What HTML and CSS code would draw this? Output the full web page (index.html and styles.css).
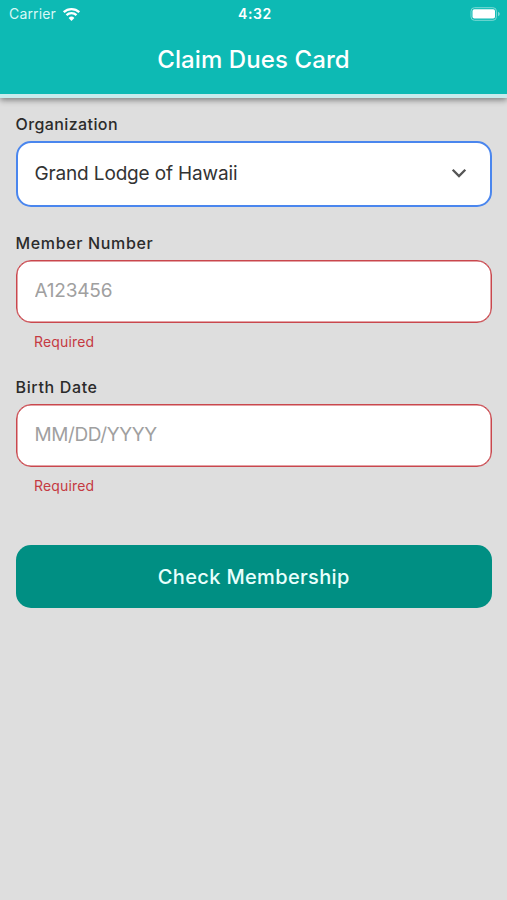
FILE: index.html
```html
<!DOCTYPE html>
<html lang="en">
<head>
  <meta charset="UTF-8">
  <meta name="viewport" content="width=device-width, initial-scale=1.0">
  <title>Claim Dues Card</title>
  <link rel="stylesheet" href="styles.css">
</head>
<body>
  <header class="header">
    <!-- Status Bar -->
    <div class="status-bar">
      <div class="carrier">
        <span>Carrier</span>
        <svg class="wifi" width="19" height="14" viewBox="0 0 18 14">
          <path d="M1.2 5.2a11.2 11.2 0 0 1 15.6 0M4 8.2a7.2 7.2 0 0 1 10 0" fill="none" stroke="#fff" stroke-width="2.3"/>
          <path d="M9 14 6.1 11a4.1 4.1 0 0 1 5.8 0z" fill="#fff"/>
        </svg>
      </div>
      <span class="time">4:32</span>
      <svg class="battery" width="31" height="14" viewBox="0 0 31 14">
        <rect x="1" y=".7" width="25.4" height="12.6" rx="3.5" fill="none" stroke="#7ddad5" stroke-width="1"/>
        <rect x="2.5" y="2.3" width="22.5" height="9.2" rx="1.8" fill="#fff"/>
        <path d="M28 4.8c2.4.8 2.4 3.6 0 4.4z" fill="#7ddad5"/>
      </svg>
    </div>
    <h1>Claim Dues Card</h1>
  </header>

  <form class="claim-form">
    <div class="field">
      <label class="label-organization" for="organization">Organization</label>
      <button type="button" class="control select" id="organization">
        <span class="organization-name">Grand Lodge of Hawaii</span>
        <svg width="16" height="10" viewBox="0 0 16 10">
          <path d="M1.7 1.7 8 8l6.3-6.3" fill="none" stroke="#555" stroke-width="2.3"/>
        </svg>
      </button>
    </div>
    <div class="field">
      <label for="member-number">Member Number</label>
      <input class="control member-number" type="text" id="member-number" placeholder="A123456">
      <div class="error">Required</div>
    </div>
    <div class="field">
      <label for="birth-date">Birth Date</label>
      <input class="control birth-date" type="text" id="birth-date" placeholder="MM/DD/YYYY">
      <div class="error">Required</div>
    </div>
    <button type="button" class="submit">Check Membership</button>
  </form>
</body>
</html>
```
FILE: styles.css
```css
* {
  box-sizing: border-box;
}
body {
  font-family: Inter, sans-serif;
  margin: 0;
  min-height: 100vh;
  background: #dedede;
  color: #2b2b2b;
}
.header {
  height: 98px;
  background: #0dbab4;
  border-bottom: 4px solid #c8ebec;
  box-shadow: 0 2px 6px rgba(0, 0, 0, 0.45);
  color: #fff;
}
.status-bar {
  display: grid;
  grid-template-columns: 1fr auto 1fr;
  align-items: center;
  height: 27px;
  padding: 0 6px 0 9px;
}
.carrier {
  display: flex;
  align-items: center;
  gap: 6px;
  font-size: 14px;
  letter-spacing: 0.15px;
  color: #d8f8f6;
}
.time {
  font-size: 14px;
  font-weight: 600;
  letter-spacing: 0.6px;
}
.battery {
  justify-self: end;
}
.header h1 {
  margin: 16px 0 0;
  font-size: 24px;
  font-weight: 500;
  line-height: 34px;
  letter-spacing: 0.1px;
  text-align: center;
}
.claim-form {
  padding: 16px 15px 0 15.5px;
}
.field label {
  display: block;
  height: 27px;
  font-size: 16px;
  font-weight: 500;
  line-height: 20px;
  letter-spacing: 0.65px;
}
.field .label-organization {
  letter-spacing: 0.4px;
}
.control {
  display: block;
  width: 100%;
  height: 63px;
  padding: 0 18px 3px;
  border: 1px solid #c9474d;
  border-radius: 15px;
  background: #fff;
  box-shadow: inset 0 0 0 0.5px #c9474d;
  color: #333;
  font-family: inherit;
  font-size: 19px;
  outline: none;
}
.control::placeholder {
  color: #a0a0a0;
  opacity: 1;
}
.member-number {
  letter-spacing: -0.2px;
}
.birth-date {
  letter-spacing: -0.4px;
}
.select {
  display: flex;
  align-items: center;
  justify-content: space-between;
  height: 66px;
  margin-bottom: 26px;
  padding: 0 23px 2px 17px;
  border: 2px solid #4a86ee;
  box-shadow: none;
  letter-spacing: -0.15px;
}
.error {
  height: 54px;
  padding: 9px 18.5px 0;
  color: #c53a42;
  font-size: 14px;
  line-height: 20px;
  letter-spacing: 0.15px;
}
.submit {
  display: block;
  width: 100%;
  height: 63px;
  margin-top: 24px;
  border: none;
  border-radius: 15px;
  background: #008f83;
  color: #e8fffc;
  font-family: inherit;
  font-size: 20px;
  font-weight: 500;
  letter-spacing: 0.35px;
}
```
